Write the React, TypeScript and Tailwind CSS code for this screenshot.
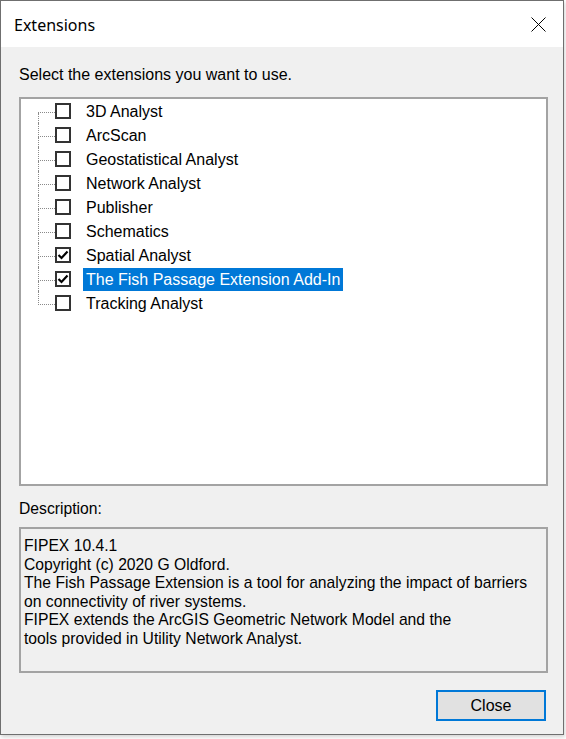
import React from 'react';

const extensions = [
  { name: '3D Analyst', checked: false },
  { name: 'ArcScan', checked: false },
  { name: 'Geostatistical Analyst', checked: false },
  { name: 'Network Analyst', checked: false },
  { name: 'Publisher', checked: false },
  { name: 'Schematics', checked: false },
  { name: 'Spatial Analyst', checked: true },
  { name: 'The Fish Passage Extension Add-In', checked: true, selected: true },
  { name: 'Tracking Analyst', checked: false },
];

const descriptionLines = [
  'FIPEX 10.4.1',
  'Copyright (c) 2020 G Oldford.',
  'The Fish Passage Extension is a tool for analyzing the impact of barriers',
  'on connectivity of river systems.',
  'FIPEX extends the ArcGIS Geometric Network Model and the',
  'tools provided in Utility Network Analyst.',
];

function CheckBox({ checked }: { checked: boolean }) {
  return (
    <div className="w-[16px] h-[16px] shrink-0 border-2 border-[#333333] bg-white flex items-center justify-center">
      {checked && (
        <svg width="12" height="12" viewBox="0 0 12 12">
          <polyline points="1.5,6 4.5,9 10.5,2.5" fill="none" stroke="#000" strokeWidth="2.2" />
        </svg>
      )}
    </div>
  );
}

export default function App() {
  return (
    <div className="w-[566px] h-[739px] bg-white font-['Liberation_Sans',Arial,sans-serif] text-black">
      <div className="w-[564px] h-[735px] border border-[#6f6f6f] flex flex-col shadow-[1px_2px_4px_rgba(0,0,0,0.18)]">
        {/* title bar */}
        <div className="h-[46px] shrink-0 bg-white flex items-center justify-between pl-[13px] pr-[17px]">
          <span className="font-['Noto_Sans',sans-serif] text-[16px] leading-none mt-[2px]">Extensions</span>
          <svg width="15" height="15" viewBox="0 0 15 15" className="mt-[1px]">
            <path d="M0.5 0.5 L14.5 14.5 M14.5 0.5 L0.5 14.5" stroke="#000" strokeWidth="1" />
          </svg>
        </div>

        {/* body */}
        <div className="flex-1 bg-[#f0f0f0] flex flex-col pl-[18px] pr-[15px]">
          <div className="mt-[19px] mb-[13px] text-[16px] leading-[18px]">Select the extensions you want to use.</div>

          <div className="h-[389px] shrink-0 border-2 border-[#a3a3a3] bg-white">
            {extensions.map((ext, i) => {
              const first = i === 0;
              const last = i === extensions.length - 1;
              return (
                <div key={ext.name} className="flex items-center h-[24px]">
                  <div className="w-[17px] shrink-0" />
                  <div className="w-[17px] h-full shrink-0 flex flex-col">
                    <div className={`h-[14px] border-b border-dotted border-b-[#8a8a8a] ${first ? '' : 'border-l border-l-[#8a8a8a]'}`} />
                    <div className={`flex-1 ${last ? '' : 'border-l border-dotted border-l-[#8a8a8a]'}`} />
                  </div>
                  <CheckBox checked={ext.checked} />
                  <div
                    className={`ml-[12px] h-[23px] px-[3px] pt-[1px] flex items-center text-[16px] whitespace-nowrap ${
                      ext.selected ? 'bg-[#0078d7] text-white' : ''
                    }`}
                  >
                    {ext.name}
                  </div>
                </div>
              );
            })}
          </div>

          <div className="mt-[14px] text-[15.7px] leading-[18px]">Description:</div>

          <div className="mt-[9px] h-[146px] shrink-0 border-2 border-[#a3a3a3] bg-[#f0f0f0] pt-[8px] pl-[3px]">
            {descriptionLines.map((line) => (
              <div key={line} className="text-[15.7px] leading-[18.6px] whitespace-nowrap">
                {line}
              </div>
            ))}
          </div>

          <div className="mt-[17px] self-end mr-[2px] w-[110px] h-[31px] border-2 border-[#0078d7] bg-[#e1e1e1] flex items-center justify-center text-[16px]">
            Close
          </div>
        </div>
      </div>
    </div>
  );
}
